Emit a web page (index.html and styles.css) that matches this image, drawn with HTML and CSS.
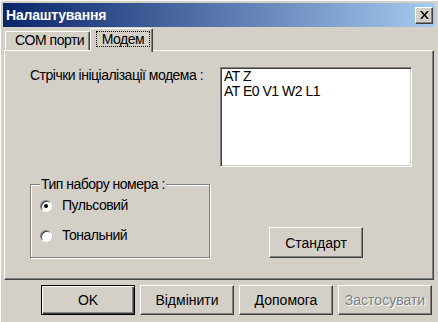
FILE: index.html
```html
<!DOCTYPE html>
<html lang="uk">
<head>
    <meta charset="UTF-8">
    <meta name="viewport" content="width=device-width, initial-scale=1.0">
    <title>Налаштування</title>
    <link rel="stylesheet" href="styles.css">
</head>
<body>
    <div class="dialog">
        <div class="titlebar">
            <span class="title">Налаштування</span>
            <button class="close" aria-label="Закрити">
                <svg width="9" height="8" viewBox="0 0 9 8">
                    <path d="M0 0h2l2.5 3 2.5-3h2L5.5 4 9 8H7L4.5 5 2 8H0l3.5-4z" fill="#000"/>
                </svg>
            </button>
        </div>

        <div class="tabs">
            <div class="tab">COM порти</div>
            <div class="tab active"><span class="focus">Модем</span></div>
        </div>

        <div class="panel">
            <div class="label">Стрічки ініціалізації модема :</div>
            <div class="textbox">
                <div>AT Z</div>
                <div>AT E0 V1 W2 L1</div>
            </div>

            <fieldset class="group">
                <legend>Тип набору номера :</legend>
                <div class="radio-row"><span class="radio checked"></span>Пульсовий</div>
                <div class="radio-row"><span class="radio"></span>Тональний</div>
            </fieldset>

            <button class="btn std">Стандарт</button>
        </div>

        <div class="actions">
            <button class="btn default">OK</button>
            <button class="btn">Відмінити</button>
            <button class="btn">Допомога</button>
            <button class="btn disabled">Застосувати</button>
        </div>
    </div>
</body>
</html>
```

FILE: styles.css
```css
* {
    box-sizing: border-box;
}
body {
    margin: 0;
    font-family: "Liberation Sans", Arial, sans-serif;
    font-size: 14px;
    letter-spacing: -0.5px;
    color: #000;
    background-color: #d4d0c8;
}
.dialog {
    width: 438px;
    height: 322px;
    padding: 3px;
    background-color: #d4d0c8;
    box-shadow: inset 1px 1px #fff;
    display: flex;
    flex-direction: column;
}

/* title bar */
.titlebar {
    height: 24px;
    display: flex;
    align-items: center;
    justify-content: space-between;
    padding: 0 2px 0 3px;
    background: linear-gradient(to right, #0a246a, #a6caf0);
}
.title {
    color: #fff;
    font-weight: bold;
    font-size: 14px;
    letter-spacing: -0.2px;
}
.close {
    width: 18px;
    height: 17px;
    padding: 0;
    display: flex;
    align-items: center;
    justify-content: center;
    background-color: #d4d0c8;
    border: 1px solid;
    border-color: #fff #404040 #404040 #fff;
    box-shadow: inset -1px -1px #808080;
}

/* tabs */
.tabs {
    height: 23px;
    display: flex;
    align-items: flex-end;
    padding-left: 2px;
}
.tab {
    width: 85px;
    height: 19px;
    padding: 1px 0 0 9px;
    line-height: 15px;
    border: 1px solid;
    border-bottom: none;
    border-color: #fff #404040 transparent #fff;
    border-radius: 2px 2px 0 0;
    box-shadow: inset -1px 0 #808080;
}
.tab.active {
    width: 63px;
    height: 24px;
    margin-bottom: -2px;
    padding: 2px 0 0 5px;
    position: relative;
    z-index: 1;
    background-color: #d4d0c8;
}
.focus {
    display: block;
    width: 54px;
    height: 16px;
    line-height: 14px;
    text-align: center;
    border: 1px dotted #000;
}

/* panel */
.panel {
    height: 230px;
    margin: 0 1px;
    padding: 16px 20px 0 25px;
    border: 1px solid;
    border-color: #fff #404040 #404040 #fff;
    box-shadow: inset -1px -1px #808080;
    display: grid;
    grid-template-columns: 180px 192px;
    grid-template-rows: 100px 81px;
    column-gap: 10px;
    row-gap: 10px;
}
.label {
    padding-top: 1px;
    line-height: 15px;
}
.textbox {
    background-color: #fff;
    padding: 1px 3px;
    line-height: 15px;
    border: 1px solid;
    border-color: #808080 #fff #fff #808080;
    box-shadow: inset 1px 1px #404040, inset -1px -1px #d4d0c8;
}

/* group box */
.group {
    margin: 0;
    padding: 6px 8px 12px 9px;
    border: 1px solid #808080;
    box-shadow: inset 1px 1px #fff, 1px 1px #fff;
    display: flex;
    flex-direction: column;
    gap: 15px;
}
.group legend {
    padding: 0 1px;
    line-height: 15px;
    background-color: #d4d0c8;
}
.radio-row {
    display: flex;
    align-items: center;
    gap: 10px;
    line-height: 15px;
}
.radio {
    width: 12px;
    height: 12px;
    border-radius: 50%;
    background-color: #fff;
    border: 1px solid;
    border-color: #808080 #fff #fff #808080;
    box-shadow: inset 1px 1px #404040;
    display: flex;
    align-items: center;
    justify-content: center;
}
.radio.checked::after {
    content: "";
    width: 4px;
    height: 4px;
    border-radius: 50%;
    background-color: #000;
}

/* buttons */
.btn {
    width: 94px;
    height: 30px;
    padding: 0;
    font: inherit;
    color: #000;
    background-color: #d4d0c8;
    border: 1px solid;
    border-color: #fff #404040 #404040 #fff;
    box-shadow: inset -1px -1px #808080;
}
.btn.std {
    height: 31px;
    margin-left: 49px;
    align-self: end;
}
.btn.default {
    border: 1px solid #000;
    box-shadow: inset 1px 1px #fff, inset -1px -1px #404040, inset -2px -2px #808080;
}
.btn.disabled {
    color: #808080;
    text-shadow: 1px 1px #fff;
}
.actions {
    display: flex;
    justify-content: flex-end;
    gap: 5px;
    margin-top: 5px;
    padding-right: 3px;
}
```
